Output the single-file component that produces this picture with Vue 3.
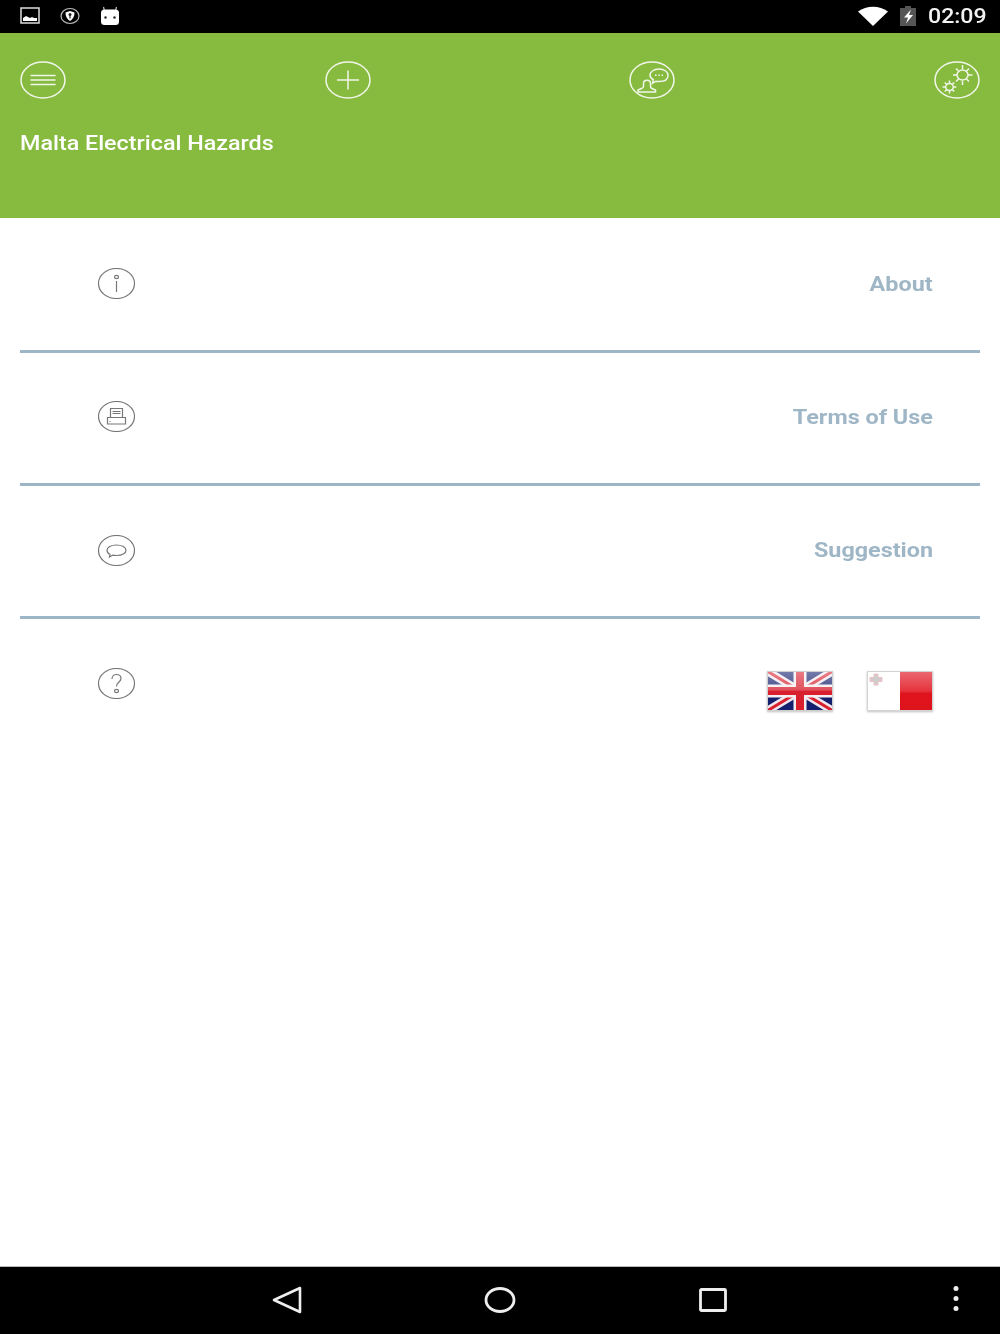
<script setup>
const rows = [
  { key: 'info', label: 'About' },
  { key: 'print', label: 'Terms of Use' },
  { key: 'chat', label: 'Suggestion' },
]
</script>

<template>
  <div class="screen">
    <div class="status">
      <div class="status-left">
        <svg class="soft" width="20" height="18" viewBox="0 0 20 18">
          <rect x="1" y="1" width="18" height="15" fill="none" stroke="#ddd" stroke-width="1.5" />
          <path d="M3 14v-3l3-2 2 1 2 1 2-1 2 1 3 0v3z" fill="#fff" />
        </svg>
        <svg class="soft" width="20" height="18" viewBox="0 0 20 18">
          <ellipse cx="10" cy="9" rx="9" ry="7.5" fill="none" stroke="#bbb" stroke-width="1.2" />
          <path d="M5.5 5.5 10 4l4.500 1.500c0 4-1.500 6.500-4.500 8.500-3-2-4.500-4.500-4.500-8.500z" fill="#fff" />
          <circle cx="10" cy="7.500" r="1.500" fill="#222" />
          <rect x="9.400" y="8" width="1.200" height="3.500" fill="#222" />
        </svg>
        <svg class="soft" width="20" height="20" viewBox="0 0 20 20">
          <path d="M4.500 5 3.500 1M15.500 5l1-4" stroke="#bbb" stroke-width="1.200" />
          <rect x="1" y="3.500" width="18" height="15.500" rx="3.500" fill="#fff" />
          <circle cx="5.500" cy="11.500" r="1.200" fill="#222" />
          <circle cx="14.500" cy="11.500" r="1.200" fill="#222" />
        </svg>
      </div>
      <div class="status-right">
        <svg class="soft" width="30" height="20" viewBox="0 0 30 20"><path d="M0 5.500C8.500 -0.800 21.500 -0.800 30 5.500L15 20z" fill="#fff" /></svg>
        <svg class="soft" width="16" height="20" viewBox="0 0 16 20">
          <path d="M5 0h6v2h5v18H0V2h5z" fill="#555" />
          <path d="M11 3.500 4 11.500h4L6 17.500 13 9H9z" fill="#fff" />
        </svg>
        <span class="clock">02:09</span>
      </div>
    </div>

    <header class="header">
      <div class="tools">
        <svg class="round" viewBox="0 0 46 38">
          <ellipse cx="23" cy="19" rx="22" ry="18" />
          <path d="M10.500 14.500h25M10.500 19h25M10.500 23.500h25" />
        </svg>
        <svg class="round" viewBox="0 0 46 38">
          <ellipse cx="23" cy="19" rx="22" ry="18" />
          <path d="M12 19h22M23 9.500v19" />
        </svg>
        <svg class="round" viewBox="0 0 46 38">
          <ellipse cx="23" cy="19" rx="22" ry="18" />
          <path d="M21 14.500c0-4 4-6.500 9-6.500s9 2.500 9 6.500-4 6-9 6c-1 0-2 0-3-.3l-3.500 2 .8-3.500c-2-1-3.300-2.600-3.300-4.700z" />
          <path d="M26 14.300h1.500M29.300 14.300h1.500M32.600 14.300h1.500" />
          <path d="M14.500 22.500c0-2 1.500-3.300 3.500-3.300s3.500 1.300 3.500 3.300v3c0 1 .5 1.700 1.500 2l3.500 1.500v2H9v-2l3.500-1.500c1.500-.5 2-1 2-2z" />
        </svg>
        <svg class="round" viewBox="0 0 46 38">
          <ellipse cx="23" cy="19" rx="22" ry="18" />
          <ellipse cx="28.500" cy="14" rx="5.500" ry="5" />
          <path d="M28.500 4v4M28.500 20v4M19 14h4M34 14h4.500M22 7.500l2.500 2.500M32.500 18l2.500 2.500M35 7.500 32.500 10M24.500 18 22 20.500" />
          <ellipse cx="15.500" cy="26" rx="3.800" ry="3.500" />
          <path d="M15.500 19.500v3M15.500 29.500v3M8.500 26h3.200M19.300 26h3M10.800 21.500l2 2M18.200 28.500l2 2M20.200 21.500l-2 2M12.800 28.500l-2 2" />
        </svg>
      </div>
      <h1 class="title">Malta Electrical Hazards</h1>
    </header>

    <main class="list">
      <div v-for="row in rows" :key="row.key" class="row">
        <svg class="line-icon" viewBox="0 0 37 31">
          <ellipse cx="18.500" cy="15.500" rx="18" ry="15" />
          <template v-if="row.key === 'info'">
            <ellipse cx="18.500" cy="9" rx="2" ry="1.600" />
            <path d="M18.500 13v11" />
          </template>
          <template v-else-if="row.key === 'print'">
            <path d="M12.500 16V7.500h12V16M14.500 10.500h8M14.500 12.500h8" />
            <path d="M9.500 16.500h18v6.500h-18zM11.500 20.500h1" />
          </template>
          <template v-else>
            <path d="M12 19.500c-2-1-3-2.500-3-4.300 0-3 4-5.200 9.500-5.200s9.500 2.200 9.500 5.200-4 5.300-9.500 5.300c-1.200 0-2.500 0-3.700-.4l-3.300 2z" />
          </template>
        </svg>
        <span class="label">{{ row.label }}</span>
      </div>

      <div class="row last">
        <svg class="line-icon" viewBox="0 0 37 31">
          <ellipse cx="18.500" cy="15.500" rx="18" ry="15" />
          <path d="M14 11c0-3 2-4.500 4.500-4.500s4.500 1.500 4.500 4c0 3.500-4.500 3.500-4.500 8" />
          <ellipse cx="18.500" cy="23" rx="2" ry="1.600" />
        </svg>
        <div class="flags">
          <svg class="flag" width="66" height="40" viewBox="0 0 66 40">
            <defs>
              <linearGradient id="uk-gloss" x1="0" y1="0" x2="0" y2="1">
                <stop offset="0" stop-color="#fff" stop-opacity=".42" />
                <stop offset=".48" stop-color="#fff" stop-opacity=".22" />
                <stop offset=".5" stop-color="#fff" stop-opacity="0" />
              </linearGradient>
            </defs>
            <rect width="66" height="40" fill="#14206e" />
            <path d="M0 0 66 40M66 0 0 40" stroke="#f0e8ee" stroke-width="8" />
            <path d="M0 0 66 40M66 0 0 40" stroke="#d8202e" stroke-width="3" />
            <path d="M33 0v40M0 20h66" stroke="#f4eef0" stroke-width="13" />
            <path d="M33 0v40M0 20h66" stroke="#d8202e" stroke-width="8" />
            <rect width="66" height="40" fill="url(#uk-gloss)" />
            <rect x=".5" y=".5" width="65" height="39" fill="none" stroke="#cfcfcf" />
          </svg>
          <svg class="flag" width="66" height="40" viewBox="0 0 66 40">
            <defs>
              <linearGradient id="mt-red" x1="0" y1="0" x2="0" y2="1">
                <stop offset="0" stop-color="#ea6a72" />
                <stop offset=".5" stop-color="#e6343c" />
                <stop offset=".56" stop-color="#e0141e" />
                <stop offset="1" stop-color="#dd141c" />
              </linearGradient>
            </defs>
            <rect width="33" height="40" fill="#fff" />
            <rect x="33" width="33" height="40" fill="url(#mt-red)" />
            <path d="M7 3h4v3.500h4v4h-4V14H7v-3.500H3v-4h4z" fill="#cfcccc" stroke="#f0c0c4" stroke-width="1" />
            <rect x=".5" y=".5" width="65" height="39" fill="none" stroke="#d4d4d4" />
          </svg>
        </div>
      </div>
    </main>

    <footer class="nav">
      <svg class="soft" width="30" height="28" viewBox="0 0 30 28">
        <path d="M28 2v24L2 14z" fill="none" stroke="#eee" stroke-width="2.600" stroke-linejoin="round" />
      </svg>
      <svg class="soft" width="32" height="28" viewBox="0 0 32 28">
        <ellipse cx="16" cy="14" rx="14" ry="11.500" fill="none" stroke="#eee" stroke-width="2.800" />
      </svg>
      <svg class="soft" width="28" height="24" viewBox="0 0 28 24">
        <rect x="1.500" y="1.500" width="25" height="21" rx="1" fill="none" stroke="#eee" stroke-width="2.800" />
      </svg>
      <svg class="more soft" width="8" height="28" viewBox="0 0 8 28">
        <circle cx="4" cy="3.500" r="2.500" fill="#eee" />
        <circle cx="4" cy="13.500" r="2.500" fill="#eee" />
        <circle cx="4" cy="23.500" r="2.500" fill="#eee" />
      </svg>
    </footer>
  </div>
</template>

<style scoped>
.screen {
  width: 1000px;
  height: 1334px;
  display: flex;
  flex-direction: column;
  background: #fff;
  font-family: Roboto, "Liberation Sans", sans-serif;
  overflow: hidden;
}
.soft {
  filter: blur(.4px);
}
.status {
  height: 33px;
  flex: none;
  background: #000;
  display: flex;
  align-items: center;
  justify-content: space-between;
  padding: 0 14px 0 20px;
}
.status-left {
  display: flex;
  align-items: center;
  gap: 20px;
  margin-top: -2px;
}
.status-right {
  display: flex;
  align-items: center;
  margin-top: -1px;
}
.status-right svg:nth-child(2) {
  margin-left: 12px;
}
.clock {
  margin-left: 12px;
  width: 58px;
  color: #f2f2f2;
  font-size: 21px;
  font-weight: 500;
  line-height: 24px;
  white-space: nowrap;
  transform: scaleX(1.1);
  transform-origin: left center;
  filter: blur(.3px);
}
.header {
  height: 185px;
  flex: none;
  background: #86bb40;
  padding: 28px 20px 0;
  box-sizing: border-box;
}
.tools {
  display: flex;
  justify-content: space-between;
}
.round {
  width: 46px;
  height: 38px;
  fill: none;
  stroke: #f2f6ea;
  stroke-width: 1.500;
  filter: blur(.4px);
}
.title {
  margin: 30px 0 0;
  color: #fff;
  font-size: 21px;
  font-weight: 500;
  line-height: 28px;
  transform: scaleX(1.11);
  transform-origin: left center;
  filter: blur(.3px);
}
.list {
  flex: 1;
  margin: 0 20px;
  padding-top: 1.500px;
}
.row {
  height: 133.300px;
  box-sizing: border-box;
  border-bottom: 3px solid #9db6c6;
  display: flex;
  align-items: center;
  justify-content: space-between;
  padding: 0 47px 2px 78px;
}
.row.last {
  border-bottom: 0;
  align-items: flex-start;
  padding-top: 49px;
}
.line-icon {
  width: 37px;
  height: 31px;
  fill: none;
  stroke: #777;
  stroke-width: 1.200;
  filter: blur(.4px);
}
.label {
  color: #9fb6c6;
  font-size: 21px;
  font-weight: 700;
  transform: scaleX(1.113);
  transform-origin: right center;
  filter: blur(.3px);
}
.flags {
  display: flex;
  gap: 34px;
  margin-top: 3px;
}
.flag {
  filter: blur(.6px) drop-shadow(0 1px 1px rgba(0, 0, 0, .25));
}
.nav {
  height: 68px;
  flex: none;
  box-sizing: border-box;
  background: #000;
  border-top: 1px solid #bbb;
  position: relative;
  display: flex;
  align-items: center;
  padding: 0 0 1px 272px;
}
.nav svg:nth-child(2) {
  margin-left: 182px;
}
.nav svg:nth-child(3) {
  margin-left: 183px;
}
.more {
  position: absolute;
  left: 952px;
  top: 18px;
}
</style>
